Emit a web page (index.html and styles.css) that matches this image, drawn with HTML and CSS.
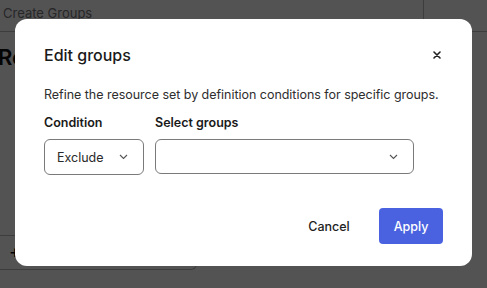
FILE: index.html
```html
<!DOCTYPE html>
<html lang="en">
<head>
    <meta charset="UTF-8">
    <title>Edit groups</title>
    <link rel="stylesheet" href="styles.css">
</head>
<body>
    <div class="page">
        <div class="topbar">
            <div class="tab">Create Groups</div>
            <div class="side"></div>
        </div>
        <div class="content">
            <h2 class="heading">Re</h2>
            <div class="addbox">
                <span class="plus">+</span>
            </div>
        </div>
    </div>

    <div class="overlay">
        <div class="modal">
            <div class="modal_head">
                <span class="title">Edit groups</span>
                <button type="button" class="close">
                    <svg width="8" height="8" viewBox="0 0 8 8">
                        <path d="M1 1 L7 7 M7 1 L1 7" stroke="#222" stroke-width="1.6" stroke-linecap="round"/>
                    </svg>
                </button>
            </div>
            <p class="desc">Refine the resource set by definition conditions for specific groups.</p>
            <div class="fields">
                <div class="field cond">
                    <label>Condition</label>
                    <div class="select">
                        <span>Exclude</span>
                        <svg class="chev" width="9" height="6" viewBox="0 0 9 6">
                            <path d="M1 1 L4.5 4.5 L8 1" fill="none" stroke="#555" stroke-width="1.1"/>
                        </svg>
                    </div>
                </div>
                <div class="field groups">
                    <label>Select groups</label>
                    <div class="select">
                        <span></span>
                        <svg class="chev" width="9" height="6" viewBox="0 0 9 6">
                            <path d="M1 1 L4.5 4.5 L8 1" fill="none" stroke="#555" stroke-width="1.1"/>
                        </svg>
                    </div>
                </div>
            </div>
            <div class="modal_foot">
                <button type="button" class="cancel">Cancel</button>
                <button type="button" class="apply">Apply</button>
            </div>
        </div>
    </div>
</body>
</html>
```

FILE: styles.css
```css
*{
    margin:0;
    padding:0;
    box-sizing: border-box;
}
body{
    background: #fff;
    font-family: Inter, "Noto Sans", sans-serif;
    color: #1f1f1f;
}
.page{
    width:487px;
    height:288px;
    overflow: hidden;
}
.topbar{
    height:32px;
    display: flex;
    border-bottom: 1px solid #bbb;
}
.tab{
    flex:1;
    padding: 5px 3px;
    font-size: 13px;
    color: #777;
}
.side{
    width:64px;
    border-left: 1px solid #bbb;
    margin-bottom: -1px;
}
.content{
    padding: 12px 0 0 0;
}
.heading{
    font-size: 22px;
    line-height: 27px;
    font-weight: 600;
    margin-left: -2px;
    color: #111;
}
.addbox{
    margin-top: 164px;
    width:197px;
    height:35px;
    border-top: 1px solid #bbb;
    border-bottom: 1px solid #bbb;
    border-right: 1px solid #bbb;
    border-radius: 0 0 6px 0;
    padding: 5px 9px;
}
.plus{
    font-size: 18px;
    color: #000;
}
.overlay{
    position: fixed;
    top:0;
    left:0;
    right:0;
    bottom:0;
    background: rgba(0,0,2,0.675);
    display: flex;
    align-items: center;
    justify-content: center;
}
.modal{
    width:457px;
    margin-top: -3px;
    background: #fff;
    border-radius: 12px;
    padding: 24px 29px 22px 29px;
}
.modal_head{
    height:24px;
    display: flex;
    align-items: center;
    justify-content: space-between;
}
.title{
    font-size: 16px;
    font-weight: 500;
    color: #1a1a1a;
}
.close{
    border:0;
    background: none;
    width:12px;
    height:12px;
    display: flex;
    align-items: center;
    justify-content: center;
}
.desc{
    margin-top: 18px;
    font-size: 12.5px;
    line-height: 20px;
    letter-spacing: -0.03px;
    white-space: nowrap;
    color: #2e2e2e;
}
.fields{
    margin-top: 8px;
    display: flex;
    gap: 11px;
}
.field label{
    display: block;
    font-size: 12.5px;
    font-weight: 600;
    line-height: 20px;
    color: #1a1a1a;
    margin-bottom: 6px;
}
.cond{
    width:100px;
}
.groups{
    width:259px;
}
.select{
    height:36px;
    border:1px solid #7a7a7a;
    border-radius: 6px;
    display: flex;
    align-items: center;
    justify-content: space-between;
    padding: 0 15px 0 12px;
    font-size: 12.5px;
    color: #2a2a2a;
}
.groups .select{
    height:35px;
}
.chev{
    width:9px;
    height:6px;
}
.modal_foot{
    margin-top: 33px;
    display: flex;
    justify-content: flex-end;
    gap: 14px;
}
.modal_foot button{
    height:36px;
    border:0;
    font-family: Inter, "Noto Sans", sans-serif;
    font-size: 12.5px;
    font-weight: 500;
    border-radius: 4px;
}
.cancel{
    width:72px;
    background: none;
    color: #1f1f1f;
}
.apply{
    width:64px;
    background: #4a62e0;
    color: #fff;
}
```
